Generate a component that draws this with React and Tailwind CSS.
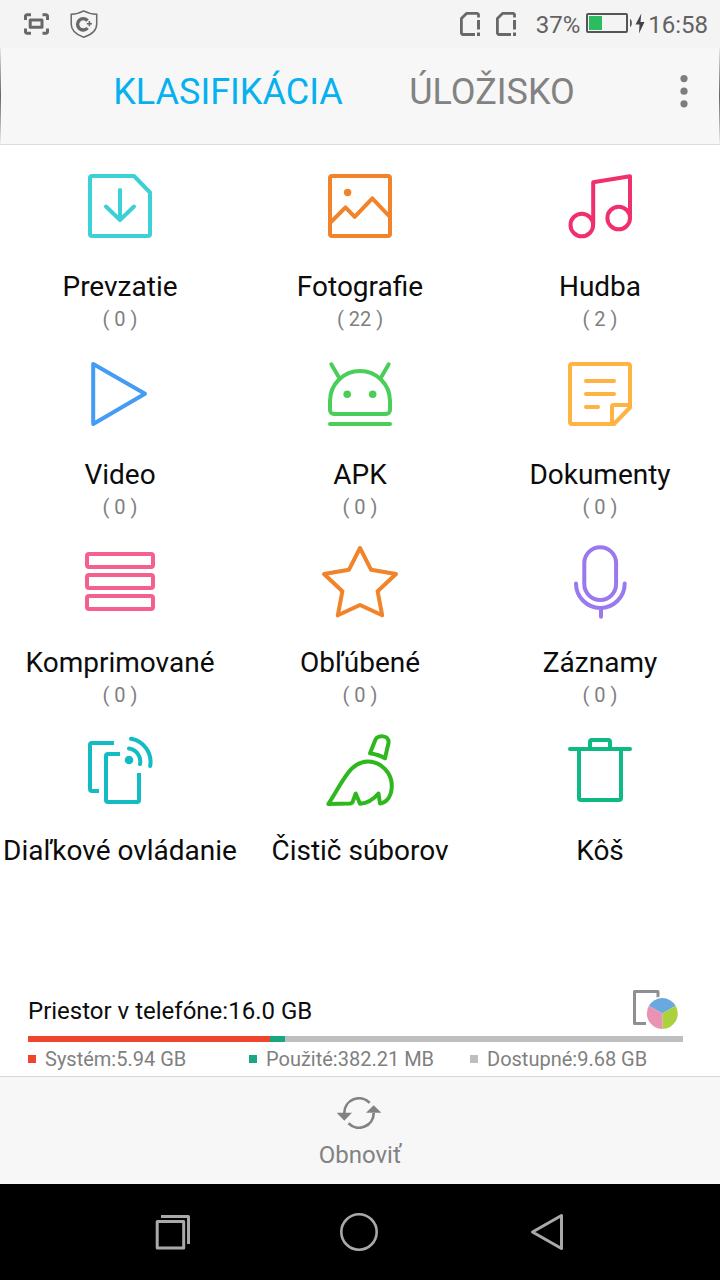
import React from "react";

function TileIcon({ children, className }) {
  return (
    <svg
      viewBox="0 0 80 80"
      className={"h-20 w-20 shrink-0 " + className}
      fill="none"
      stroke="currentColor"
      strokeWidth="4"
      strokeLinecap="round"
      strokeLinejoin="round"
      aria-hidden="true"
    >
      {children}
    </svg>
  );
}

const categories = [
  {
    label: "Prevzatie",
    count: 0,
    icon: (
      <TileIcon className="text-[#3bd1d6]">
        <path d="M12 10H54L70 26.5V68A2 2 0 0 1 68 70H12A2 2 0 0 1 10 68V12A2 2 0 0 1 12 10Z" />
        <path d="M40 24V54M26 40.5L40 54L54 40.5" />
      </TileIcon>
    ),
  },
  {
    label: "Fotografie",
    count: 22,
    icon: (
      <TileIcon className="text-[#f1832b]">
        <rect x="10" y="10" width="60" height="60" rx="2" />
        <circle cx="27.6" cy="26.5" r="3.7" fill="currentColor" stroke="none" />
        <path d="M10 57L25.5 41.3L34.7 50.8L52.3 32.3L70 51" />
      </TileIcon>
    ),
  },
  {
    label: "Hudba",
    count: 2,
    icon: (
      <TileIcon className="text-[#f0306c]">
        <circle cx="21.8" cy="59" r="11.3" />
        <circle cx="58.7" cy="52" r="11.3" />
        <path d="M33.2 59V16.3L70 10.3V52" />
      </TileIcon>
    ),
  },
  {
    label: "Video",
    count: 0,
    icon: (
      <TileIcon className="text-[#459cf3]">
        <path d="M13.2 10V70L65 39.8Z" />
      </TileIcon>
    ),
  },
  {
    label: "APK",
    count: 0,
    icon: (
      <TileIcon className="text-[#4bcd59]">
        <path d="M10 47A30 30 0 0 1 70 47V56A4 4 0 0 1 66 60H14A4 4 0 0 1 10 56Z" />
        <path d="M11.3 10.3L19.3 24M68.7 10.3L60.7 24M10 70H70" />
        <circle cx="27.2" cy="40.2" r="3.8" fill="currentColor" stroke="none" />
        <circle cx="52.7" cy="40.2" r="3.8" fill="currentColor" stroke="none" />
      </TileIcon>
    ),
  },
  {
    label: "Dokumenty",
    count: 0,
    icon: (
      <TileIcon className="text-[#feb342]">
        <path d="M70 53V12A2 2 0 0 0 68 10H12A2 2 0 0 0 10 12V68A2 2 0 0 0 12 70H54L70 53.5" />
        <path d="M52 70V53A2 2 0 0 1 54 51H70" />
        <path d="M26 27H54M26 40H54M26 53H38" />
      </TileIcon>
    ),
  },
  {
    label: "Komprimované",
    count: 0,
    icon: (
      <TileIcon className="text-[#f5608f]">
        <rect x="7" y="12" width="66" height="13" rx="2" />
        <rect x="7" y="33" width="66" height="13" rx="2" />
        <rect x="7" y="54" width="66" height="13" rx="2" />
      </TileIcon>
    ),
  },
  {
    label: "Obľúbené",
    count: 0,
    icon: (
      <TileIcon className="text-[#f1832b]">
        <path d="M40 6L51 27.7L76 32L57.6 49.2L62.2 73.3L40 63L17.8 73.3L22.4 49.2L4 32L29 27.7Z" />
      </TileIcon>
    ),
  },
  {
    label: "Záznamy",
    count: 0,
    icon: (
      <TileIcon className="text-[#9979ed]">
        <rect x="24.3" y="5.2" width="31.8" height="52.8" rx="15.9" />
        <path d="M16 41.5A24.35 24.4 0 0 0 64.7 41.5M41 66V74.7" />
      </TileIcon>
    ),
  },
  {
    label: "Diaľkové ovládanie",
    icon: (
      <TileIcon className="text-[#13bcc2]">
        <g strokeLinecap="butt">
          <path d="M34 13H12A2 2 0 0 0 10 15V59A2 2 0 0 0 12 61H19" />
          <path d="M40 24H28A2 2 0 0 0 26 26V70A2 2 0 0 0 28 72H57A2 2 0 0 0 59 70V43" />
        </g>
        <circle cx="49" cy="30" r="4.3" fill="currentColor" stroke="none" />
        <path d="M49 18.5A13 13 0 0 1 60 34" />
        <path d="M51 8.8A23.5 23.5 0 0 1 70.2 36" />
      </TileIcon>
    ),
  },
  {
    label: "Čistič súborov",
    icon: (
      <TileIcon className="text-[#2fb81e]">
        <path d="M8.3 74C15 64 21 52 28 43C34 35 41 31.5 48 31.5C61 31.5 72 43 71.8 56C71.7 66 67 72.5 60 73.5L58.5 63.5C53 70 47 73.3 40 73.8L35.7 63.5L33 71A3.5 3.5 0 0 1 30 73.6Z" />
        <path d="M50 23.2L55.5 9.5C57.5 5 69.500 4.500 68.5 13L65 28.3C60.500 25.500 55 24 50 23.2Z" />
      </TileIcon>
    ),
  },
  {
    label: "Kôš",
    icon: (
      <TileIcon className="text-[#0eb983]">
        <path d="M10 19H70M19 19V68A2 2 0 0 0 21 70H59A2 2 0 0 0 61 68V19" />
        <path d="M30 18V12A2 2 0 0 1 32 10H48A2 2 0 0 1 50 12V18" />
      </TileIcon>
    ),
  },
];

const storage = [
  { label: "Systém:5.94 GB", color: "bg-[#ee452c]", share: 37 },
  { label: "Použité:382.21 MB", color: "bg-[#1aa681]", share: 2.3 },
  { label: "Dostupné:9.68 GB", color: "bg-[#bebebe]", share: 60.7 },
];

function SimIcon() {
  return (
    <svg viewBox="0 0 20 24" className="h-6 w-5" fill="none" stroke="#686868" strokeWidth="2.8" aria-hidden="true">
      <path d="M18.5 5.5V2.5L17.5 1.4H6.5L1.4 6.5V21.3L2.5 22.5H15" strokeLinejoin="round" />
      <path d="M18.5 8V17.5M18.5 20.5V24" strokeWidth="3" />
    </svg>
  );
}

function StatusBar() {
  return (
    <div className="flex h-12 items-center justify-between bg-[#f4f4f4] pl-6 pr-3 text-2xl text-[#626262]">
      <div className="flex items-center gap-5">
        <svg viewBox="0 0 26 24" className="h-6 w-[26px]" fill="none" stroke="#686868" strokeWidth="3" strokeLinejoin="round" aria-hidden="true">
          <path d="M1.5 8V3.8L2.5 2.8H7M18.5 2.8H22.500L23.5 3.8V8M23.5 16.5V20.2L22.5 21.2H18.5M7 21.2H2.5L1.5 20.2V16.5" />
          <rect x="6.200" y="8" width="11.800" height="7.300" />
        </svg>
        <svg viewBox="0 0 28 28" className="h-7 w-7" fill="none" stroke="#686868" aria-hidden="true">
          <path d="M13.7 .9C10 3 5.500 4.200 1.2 4.200V14C1.2 20.500 7 25 13.7 27.2C20.5 25 26.7 20.500 26.7 14V4.200C22 4.200 17.5 3 13.7 .9Z" strokeWidth="1.5" />
          <path d="M17.6 10.600A5.700 5.700 0 1 0 17.6 18" strokeWidth="3.4" />
          <path d="M16.8 13.700H22M19.4 11.100V16.300" strokeWidth="1.6" />
        </svg>
      </div>
      <div className="flex items-center">
        <div className="flex gap-4 pr-5">
          <SimIcon />
          <SimIcon />
        </div>
        <span className="pr-1.5 pt-0.5">37%</span>
        <svg viewBox="0 0 60 22" className="mr-0.5 h-[22px] w-[60px]" aria-hidden="true">
          <rect x="1" y="1" width="40" height="18" rx="1" fill="none" stroke="#555" strokeWidth="2" />
          <rect x="3" y="3" width="13" height="14" fill="#2bbc60" />
          <path d="M44 6C46.5 7 46.5 13 44 14Z" fill="#555" />
          <path d="M55.300 .5L49.5 11.5H53.5L53 20.500L58.5 9H54.5Z" fill="#444" />
        </svg>
        <span className="pt-0.5">16:58</span>
      </div>
    </div>
  );
}

function EdgeShade() {
  return <span className="w-px shrink-0 bg-gradient-to-b from-[#e8e8e8] via-[#666] to-[#f0f0f0]" />;
}

function Header() {
  return (
    <header className="flex h-[97px] border-b border-[#dcdcdc] bg-[#f7f7f7]">
      <EdgeShade />
      <div className="flex flex-1 items-stretch pb-2 pl-[95px]">
        <nav className="grid flex-1 grid-cols-2 text-4xl">
          <button type="button" aria-current="page" className="text-[#06b1f0]">
            KLASIFIKÁCIA
          </button>
          <button type="button" className="text-[#828282]">
            ÚLOŽISKO
          </button>
        </nav>
        <button type="button" aria-label="Menu" className="ml-6 flex w-[71px] items-center justify-center">
          <svg viewBox="0 0 8 34" className="h-[34px] w-2" fill="#7d7d7d" aria-hidden="true">
            <circle cx="4" cy="3.600" r="3.600" />
            <circle cx="4" cy="16.200" r="3.600" />
            <circle cx="4" cy="28.800" r="3.600" />
          </svg>
        </button>
      </div>
      <EdgeShade />
    </header>
  );
}

function Categories() {
  return (
    <main className="grid flex-1 grid-cols-3 content-start gap-y-[23px] pb-6 pt-[21px]">
      {categories.map((item) => (
        <button key={item.label} type="button" className="flex flex-col items-center">
          {item.icon}
          <span className="mt-[25px] whitespace-nowrap text-[28px] leading-8 text-[#0c0c0c]">{item.label}</span>
          {item.count !== undefined && (
            <span className="mt-1 text-xl leading-6 text-[#808080]">( {item.count} )</span>
          )}
        </button>
      ))}
    </main>
  );
}

function Storage() {
  return (
    <section className="pb-[5px] pl-7 pr-[37px]">
      <div className="flex items-end justify-between">
        <h2 className="text-2xl leading-9 text-[#0c0c0c]">Priestor v telefóne:16.0 GB</h2>
        <svg viewBox="0 0 52 40" className="h-10 w-[52px]" aria-hidden="true">
          <path d="M27 10V2.5H3.5V34.5H15" fill="none" stroke="#8f8f8f" strokeWidth="3" strokeLinejoin="round" />
          <circle cx="31.3" cy="24.5" r="17" fill="#fff" />
          <path d="M31.3 24.5L17.9 16.8A15.5 15.5 0 0 1 44.7 16.8Z" fill="#6aa9df" />
          <path d="M31.3 24.5L44.7 16.8A15.5 15.5 0 0 1 31.3 40Z" fill="#abd13c" />
          <path d="M31.3 24.5L31.3 40A15.5 15.5 0 0 1 17.9 16.8Z" fill="#e893b1" />
        </svg>
      </div>
      <div className="mt-[7px] flex h-1.5">
        {storage.map((part) => (
          <span key={part.label} className={part.color} style={{ width: part.share + "%" }} />
        ))}
      </div>
      <ul className="mt-[5px] grid grid-cols-3 gap-2 text-xl leading-6 text-[#808080]">
        {storage.map((part) => (
          <li key={part.label} className="flex items-center gap-[9px] whitespace-nowrap">
            <span className={"h-2 w-2 " + part.color} />
            {part.label}
          </li>
        ))}
      </ul>
    </section>
  );
}

function NavBar() {
  return (
    <nav className="grid h-24 grid-cols-3 bg-black px-20 text-[#a9a9a9]">
      <button type="button" aria-label="Nedávne" className="flex items-center justify-center">
        <svg viewBox="0 0 40 40" className="h-10 w-10" fill="none" stroke="currentColor" strokeWidth="3" strokeLinejoin="round" aria-hidden="true">
          <rect x="4.2" y="9.500" width="26.500" height="26.500" />
          <path d="M8 4.500H35.500V32" />
        </svg>
      </button>
      <button type="button" aria-label="Domov" className="flex items-center justify-center">
        <svg viewBox="0 0 40 40" className="h-10 w-10" fill="none" stroke="currentColor" strokeWidth="2.6" aria-hidden="true">
          <circle cx="19" cy="20" r="17.7" />
        </svg>
      </button>
      <button type="button" aria-label="Späť" className="flex items-center justify-center">
        <svg viewBox="0 0 40 40" className="h-10 w-10" fill="none" stroke="currentColor" strokeWidth="3" strokeLinejoin="round" aria-hidden="true">
          <path d="M5.5 20L34.5 3.500V36.500Z" />
        </svg>
      </button>
    </nav>
  );
}

export default function App() {
  return (
    <div className="flex min-h-screen flex-col bg-white font-['Roboto',sans-serif]">
      <StatusBar />
      <Header />
      <Categories />
      <Storage />
      <footer className="flex justify-center border-t border-[#d8d8d8] bg-[#f7f7f7]">
        <button type="button" className="flex flex-col items-center pb-[13px] pt-5 text-2xl leading-8 text-[#828282]">
          <svg viewBox="0 0 48 32" className="mb-2.5 h-8 w-12" aria-hidden="true">
            <path d="M8.3 16A14.7 14.7 0 0 1 33.7 5.9M37.7 16A14.7 14.7 0 0 1 12.5 26.3" fill="none" stroke="currentColor" strokeWidth="2.7" />
            <path d="M.7 15.7H16L8.3 23.7ZM30 15.7H45.3L37.7 8.3Z" fill="currentColor" />
          </svg>
          Obnoviť
        </button>
      </footer>
      <NavBar />
    </div>
  );
}
